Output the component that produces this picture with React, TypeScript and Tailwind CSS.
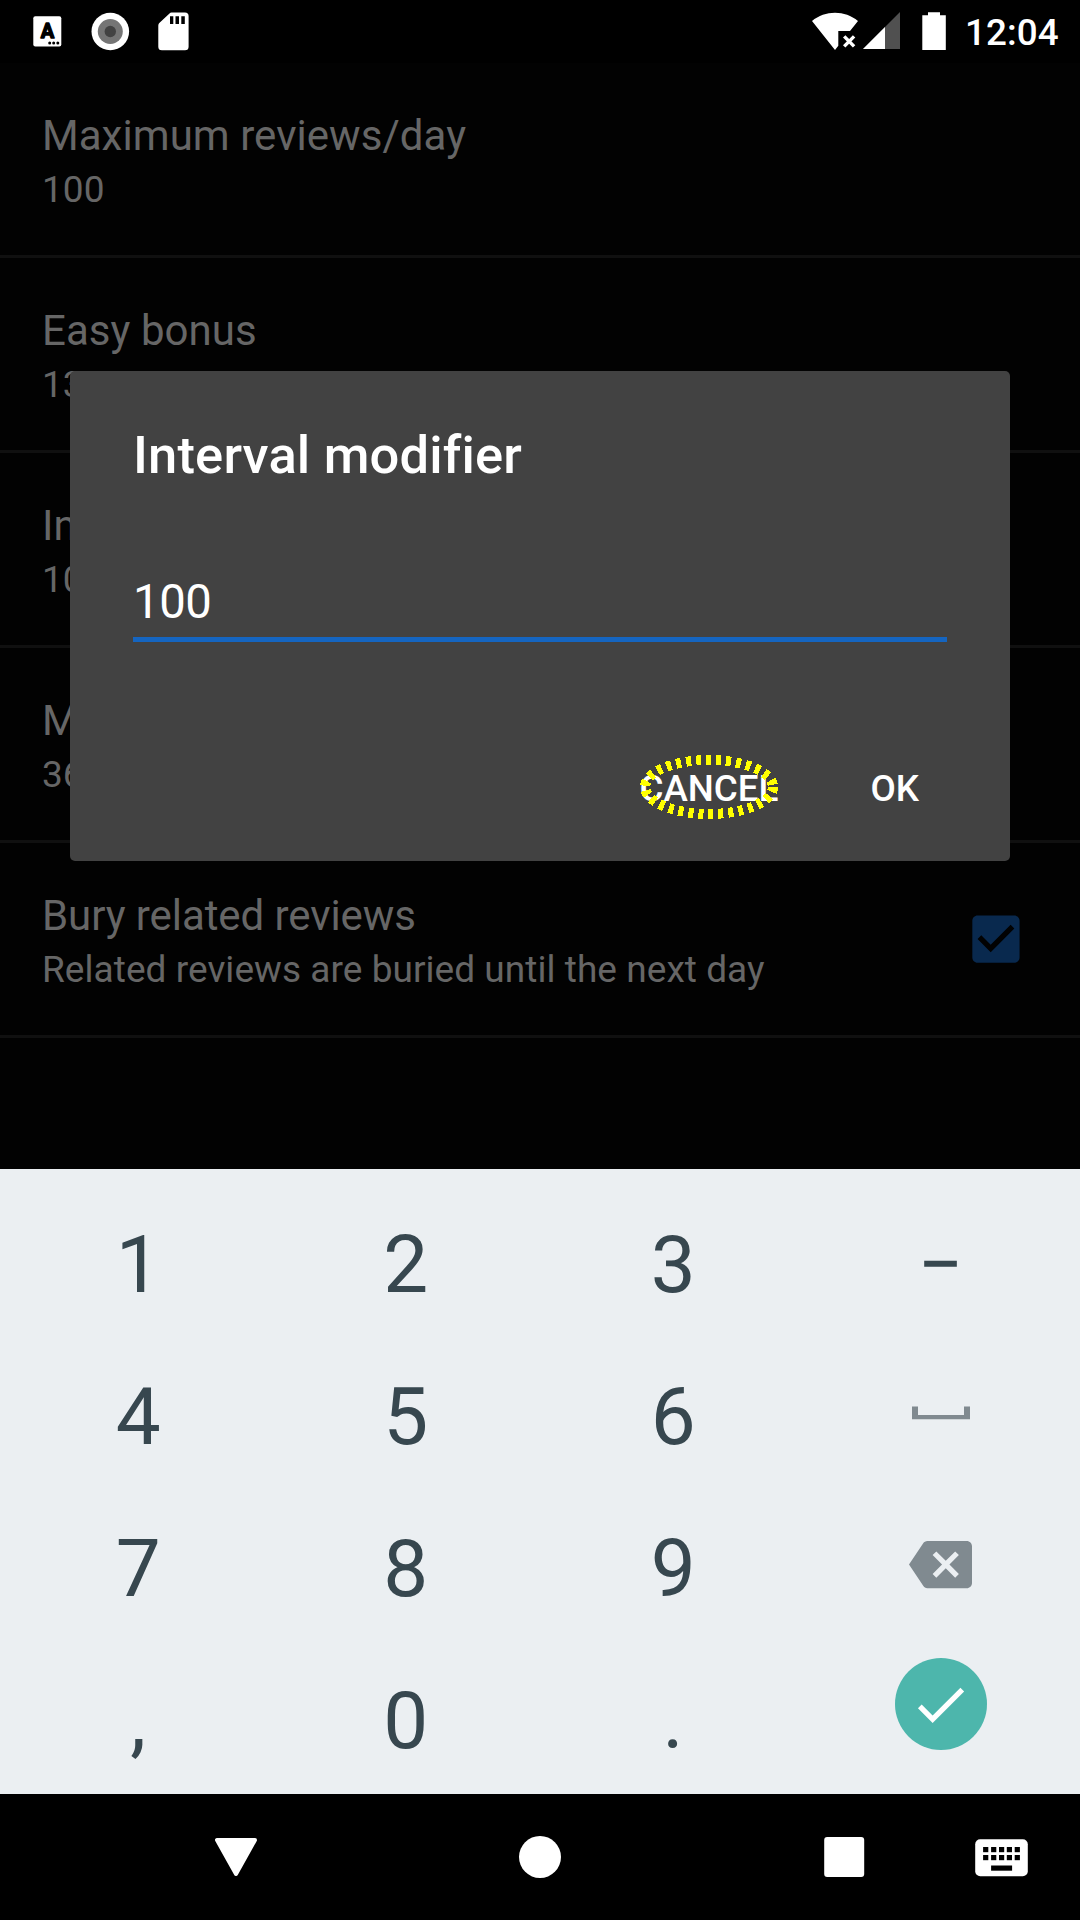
import React from "react";

const rows = [
  { title: "Maximum reviews/day", summary: "100", tracking: "tracking-[0.05px]" },
  { title: "Easy bonus", summary: "130 %", tracking: "tracking-[0.05px]" },
  { title: "Interval modifier", summary: "100 %", tracking: "tracking-normal" },
  { title: "Maximum interval", summary: "36500", tracking: "tracking-normal" },
  {
    title: "Bury related reviews",
    summary: "Related reviews are buried until the next day",
    tracking: "tracking-[-0.08px]",
    checked: true,
  },
];

function StatusBar() {
  return (
    <header className="flex h-[63px] items-start bg-black">
      <svg width="240" height="63" viewBox="0 0 240 63">
        <rect x="33.3" y="16.2" width="28" height="30.4" rx="2" fill="#fff" />
        <text x="47.4" y="38" textAnchor="middle" fontFamily="Roboto" fontWeight="700" fontSize="20" stroke="#000" strokeWidth="1.4" strokeLinejoin="round">A</text>
        <circle cx="49.7" cy="43.1" r="1.5" />
        <circle cx="53.7" cy="43.1" r="1.5" />
        <circle cx="57.8" cy="43.1" r="1.5" />
        <circle cx="110.3" cy="31.5" r="18.8" fill="#fff" />
        <circle cx="110.3" cy="31.5" r="12.5" fill="#757575" />
        <circle cx="110.3" cy="31.5" r="5.7" fill="#424242" />
        <path d="M171.5 12.5H185a3.6 3.6 0 0 1 3.6 3.6V46.7a3.6 3.6 0 0 1-3.6 3.6H161.9a3.6 3.6 0 0 1-3.6-3.6V25.5a4 4 0 0 1 1-2.4L169.5 13.5a3 3 0 0 1 2-1z" fill="#fff" />
        <path d="M170 16.300h3.300V24H170zM175.500 16.300h3.500V24h-3.500zM181.300 16.300h3.500V24h-3.500z" />
      </svg>
      <svg className="ml-auto" width="165" height="63" viewBox="800 0 165 63">
        <path d="M812 21C825 10 845 10 858 21L850 31H838.300V45.800L835 49.900z" fill="#fff" />
        <path d="M844.200 36.400L854.100 46.400M854.100 36.400L844.200 46.400" stroke="#fff" strokeWidth="3.4" />
        <path d="M863 49L900 12V49z" fill="#505050" />
        <path d="M863 49L885 27V49z" fill="#fff" />
        <path d="M928 12.200H940V15.200H945.800V50H922.300V15.200H928z" fill="#fff" />
      </svg>
      <span className="w-[115px] pt-[11px] text-[36.75px] leading-[43px] font-medium tracking-[0.1px] whitespace-nowrap">12:04</span>
    </header>
  );
}

type RowProps = { title: string; summary: string; tracking: string; checked?: boolean };

function SettingRow({ title, summary, tracking, checked }: RowProps) {
  return (
    <div className="flex h-[195px] border-b-[3px] border-[#101010] pl-[42px] text-[#666]">
      <div className="flex flex-col gap-2 pt-12 whitespace-nowrap">
        <div className={`text-[42px] leading-[49px] ${tracking}`}>{title}</div>
        <div className="text-[37px] leading-[43px] tracking-[0.05px]">{summary}</div>
      </div>
      {checked && (
        <svg className="mt-[64px] mr-[52px] ml-auto" width="64" height="64" viewBox="0 -0.2 24.38 24.38" fill="#09294e">
          <path d="M19 3H5c-1.110 0-2 .9-2 2v14c0 1.100.89 2 2 2h14c1.110 0 2-.9 2-2V5c0-1.100-.89-2-2-2zm-9 14l-5-5 1.410-1.410L10 14.170l7.590-7.590L19 8l-9 9z" transform="translate(0.17 0)" />
        </svg>
      )}
    </div>
  );
}

function Dialog() {
  return (
    <section className="absolute top-[371px] left-[70px] flex h-[490px] w-[940px] flex-col rounded-[5px] bg-[#424242] px-[63px] pt-[52px]">
      <h2 className="text-[52.5px] leading-[64px] font-medium tracking-[0.17px] whitespace-nowrap">Interval modifier</h2>
      <div className="mt-[88px] h-[67px] border-b-[5px] border-[#1565c0] text-[47.25px] leading-[55px] tracking-[-0.4px]">100</div>
      <div className="mt-[125px] flex justify-end pr-[28px] text-[36.75px] leading-[43px] font-medium">
        <button className="relative mr-[92px]">
          CANCEL
          <svg className="absolute top-[-15px] left-[-5px]" width="150" height="72" viewBox="634 752 150 72">
            <ellipse cx="709" cy="787" rx="64" ry="27" fill="none" stroke="#ff0" strokeWidth="10" strokeDasharray="5 5" shapeRendering="crispEdges" />
          </svg>
        </button>
        <button>OK</button>
      </div>
    </section>
  );
}

function Keypad() {
  const key = "flex h-[152px] justify-center leading-[94px] pt-[43px]";
  return (
    <section className="h-[625px] bg-[#ebeff2] pt-[6px] pr-[3.6px] pl-[4.4px] text-[80px] text-[#37474f]">
      <div className="grid grid-cols-[267.5px_267.5px_267.5px_267.5px]">
        <span className={key}>1</span>
        <span className={key}>2</span>
        <span className={key}>3</span>
        <span className={key}>−</span>
        <span className={key}>4</span>
        <span className={key}>5</span>
        <span className={key}>6</span>
        <span className="flex h-[152px] justify-center pt-[79px]">
          <svg width="58" height="14" viewBox="0 0 58 14">
            <path d="M0 0.500H6V9H52V0.500H58V13.300H0z" fill="#808a90" />
          </svg>
        </span>
        <span className={key}>7</span>
        <span className={key}>8</span>
        <span className={key}>9</span>
        <span className="flex h-[152px] justify-center pt-[54px]">
          <svg width="63" height="63" viewBox="0 0 24 24" fill="#808a90">
            <path d="M22 3H7c-.69 0-1.230.35-1.590.88L0 12l5.410 8.110c.36.53.9.89 1.590.89h15c1.100 0 2-.9 2-2V5c0-1.100-.9-2-2-2zm-3 12.590L17.590 17 14 13.410 10.410 17 9 15.590 12.590 12 9 8.410 10.410 7 14 10.590 17.590 7 19 8.410 15.410 12 19 15.590z" />
          </svg>
        </span>
        <span className={key}>,</span>
        <span className={key}>0</span>
        <span className={key}>.</span>
        <span className="flex h-[152px] justify-center pt-[27px] pl-[1px]">
          <span className="flex h-[92px] w-[92px] items-center justify-center rounded-full bg-[#4db6ac]">
            <svg className="mr-px" width="63" height="63" viewBox="0 0 24 24" fill="#fff">
              <path d="M9 16.170L4.830 12l-1.420 1.410L9 19 21 7l-1.410-1.410z" />
            </svg>
          </span>
        </span>
      </div>
    </section>
  );
}

function NavigationBar() {
  const keys = [983.1, 991.1, 999, 1006.8, 1014.7];
  return (
    <nav className="h-[126px] bg-black">
      <svg width="1080" height="126" viewBox="0 1794 1080 126" fill="#fff">
        <path d="M217 1840H255L236 1874z" stroke="#fff" strokeWidth="4" strokeLinejoin="round" />
        <circle cx="540" cy="1857" r="21" />
        <rect x="824.2" y="1837" width="40" height="40" rx="3" />
        <rect x="975.2" y="1839.2" width="52.6" height="37" rx="5" />
        {keys.map((x) => (
          <React.Fragment key={x}>
            <rect x={x} y="1847" width="5.2" height="5.2" fill="#000" />
            <rect x={x} y="1855" width="5.2" height="5.2" fill="#000" />
          </React.Fragment>
        ))}
        <rect x="991.1" y="1865.5" width="21" height="5.2" fill="#000" />
      </svg>
    </nav>
  );
}

export default function App() {
  return (
    <div className="relative flex h-[1920px] w-[1080px] flex-col overflow-hidden bg-[#020202] font-[Roboto,sans-serif] text-white">
      <StatusBar />
      <main className="h-[1106px]">
        {rows.map((r) => (
          <SettingRow key={r.title} {...r} />
        ))}
      </main>
      <Dialog />
      <Keypad />
      <NavigationBar />
    </div>
  );
}
